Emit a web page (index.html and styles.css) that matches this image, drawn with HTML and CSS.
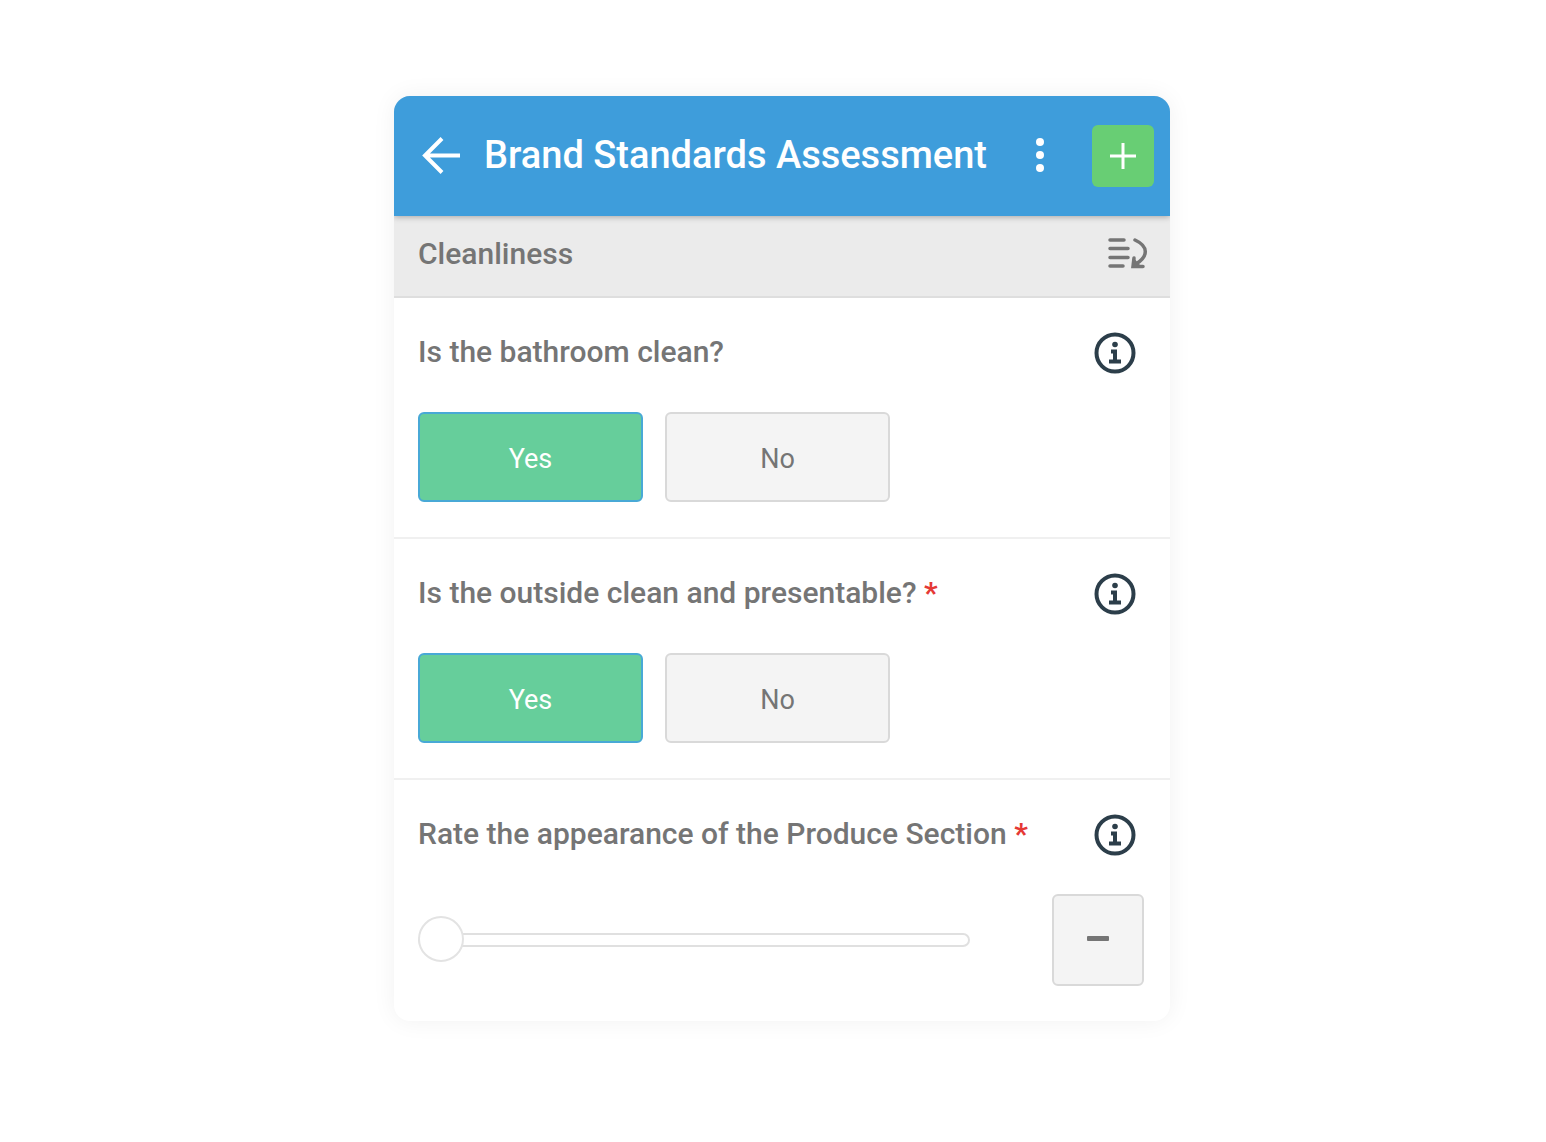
FILE: index.html
```html
<!DOCTYPE html>
<html lang="en">
<head>
    <meta charset="UTF-8">
    <meta name="viewport" content="width=device-width, initial-scale=1">
    <title>Brand Standards Assessment</title>
    <link rel="stylesheet" href="styles.css">
</head>
<body>
    <main class="card">
        <header class="top-bar">
            <button class="icon-btn" type="button" aria-label="Back">
                <svg width="40" height="40" viewBox="0 0 40 40" fill="none" stroke="currentColor" stroke-width="4">
                    <path d="M39 19.500H5M21 2.500L4 19.500L21 36.500"/>
                </svg>
            </button>
            <h1>Brand Standards Assessment</h1>
            <button class="icon-btn menu-btn" type="button" aria-label="More options">
                <svg width="10" height="36" viewBox="0 0 10 36" fill="currentColor">
                    <circle cx="5" cy="4" r="4"/>
                    <circle cx="5" cy="17" r="4"/>
                    <circle cx="5" cy="30" r="4"/>
                </svg>
            </button>
            <button class="icon-btn add-btn" type="button" aria-label="Add">
                <svg width="26" height="26" viewBox="0 0 26 26" fill="none" stroke="currentColor" stroke-width="3">
                    <path d="M13 0V26M0 13H26"/>
                </svg>
            </button>
        </header>

        <div class="section-bar">
            <h2>Cleanliness</h2>
            <button class="icon-btn" type="button" aria-label="Jump to section">
                <svg width="40" height="32" viewBox="0 0 40 32" fill="none" stroke="currentColor" stroke-width="3.500" stroke-linecap="round">
                    <path d="M2 2H16M2 10.500H20M2 19.500H20M2 28H15"/>
                    <path d="M27 2C40 8 41 18 28 26"/>
                    <path d="M26 20L25 28.500H35"/>
                    <path d="M26 20L24 29H34L30 25Z" fill="currentColor" stroke="none"/>
                </svg>
            </button>
        </div>

        <section class="question">
            <div class="question-head">
                <h3>Is the bathroom clean?</h3>
                <button class="icon-btn info-btn" type="button" aria-label="Info">
                    <svg width="42" height="42" viewBox="0 0 42 42">
                        <circle cx="21" cy="21" r="18.500" fill="none" stroke="currentColor" stroke-width="4"/>
                        <circle cx="21" cy="12.500" r="2.800" fill="currentColor"/>
                        <path d="M17 17.500H23V27.500H27V31.500H15V27.500H19V21.500H17z" fill="currentColor"/>
                    </svg>
                </button>
            </div>
            <div class="answers">
                <button class="answer selected" type="button" aria-pressed="true">Yes</button>
                <button class="answer" type="button" aria-pressed="false">No</button>
            </div>
        </section>

        <section class="question">
            <div class="question-head">
                <h3>Is the outside clean and presentable? <span class="required">*</span></h3>
                <button class="icon-btn info-btn" type="button" aria-label="Info">
                    <svg width="42" height="42" viewBox="0 0 42 42">
                        <circle cx="21" cy="21" r="18.500" fill="none" stroke="currentColor" stroke-width="4"/>
                        <circle cx="21" cy="12.500" r="2.800" fill="currentColor"/>
                        <path d="M17 17.500H23V27.500H27V31.500H15V27.500H19V21.500H17z" fill="currentColor"/>
                    </svg>
                </button>
            </div>
            <div class="answers">
                <button class="answer selected" type="button" aria-pressed="true">Yes</button>
                <button class="answer" type="button" aria-pressed="false">No</button>
            </div>
        </section>

        <section class="question">
            <div class="question-head">
                <h3><label for="rating">Rate the appearance of the Produce Section <span class="required">*</span></label></h3>
                <button class="icon-btn info-btn" type="button" aria-label="Info">
                    <svg width="42" height="42" viewBox="0 0 42 42">
                        <circle cx="21" cy="21" r="18.500" fill="none" stroke="currentColor" stroke-width="4"/>
                        <circle cx="21" cy="12.500" r="2.800" fill="currentColor"/>
                        <path d="M17 17.500H23V27.500H27V31.500H15V27.500H19V21.500H17z" fill="currentColor"/>
                    </svg>
                </button>
            </div>
            <div class="rating">
                <input type="range" id="rating" min="0" max="10" value="0">
                <button class="answer minus-btn" type="button" aria-label="Clear rating">
                    <svg width="22" height="5" viewBox="0 0 22 5" fill="currentColor">
                        <rect width="22" height="5" rx="1"/>
                    </svg>
                </button>
            </div>
        </section>
    </main>
</body>
</html>
```

FILE: styles.css
```css
*{
    box-sizing: border-box;
}
body{
    margin: 0;
    padding: 96px 0 96px 18px;
    background-color: white;
    font-family: Roboto, "Liberation Sans", sans-serif;
    color: #757575;
}
h1, h2, h3{
    margin: 0;
    font-weight: 500;
}
button{
    font-family: inherit;
    color: inherit;
    cursor: pointer;
}
.card{
    max-width: 776px;
    margin: 0 auto;
    border-radius: 16px;
    overflow: hidden;
    background-color: white;
    box-shadow: 0 0 24px rgba(0, 0, 0, 0.06);
}
.icon-btn{
    display: flex;
    flex-shrink: 0;
    align-items: center;
    justify-content: center;
    padding: 0;
    border: none;
    background: none;
}

/* top bar */
.top-bar{
    position: relative;
    display: flex;
    align-items: center;
    height: 120px;
    padding: 0 16px 0 27px;
    background-color: #3e9ddb;
    color: white;
    box-shadow: 0 1px 6px rgba(0, 0, 0, 0.3);
}
h1{
    flex: 1;
    margin-left: 23px;
    padding-bottom: 2px;
    font-size: 38px;
    line-height: 48px;
}
.menu-btn{
    width: 40px;
    margin-right: 32px;
}
.add-btn{
    width: 62px;
    height: 62px;
    border-radius: 6px;
    background-color: #68ce74;
}

.section-bar{
    display: flex;
    align-items: center;
    justify-content: space-between;
    height: 82px;
    padding: 0 22px 4px 24px;
    border-bottom: 2px solid #dedede;
    background-color: #ebebeb;
}
h2, h3{
    font-size: 30px;
    line-height: 40px;
}

/* questions */
.question{
    padding: 34px 26px 35px 24px;
    border-bottom: 2px solid #f0f0f0;
}
.question:last-child{
    border-bottom: none;
}
.question-head{
    display: flex;
    justify-content: space-between;
    margin-bottom: 38px;
}
.info-btn{
    margin-right: 8px;
    color: #2c3e4a;
}
.required{
    color: #e53935;
    font-weight: 700;
}
.answers{
    display: flex;
    gap: 22px;
}
.answer{
    width: 225px;
    height: 90px;
    padding: 4px 0 0;
    border: 2px solid #d9d9d9;
    border-radius: 6px;
    background-color: #f4f4f4;
    font-size: 27px;
}
.selected{
    border-color: #48a9d6;
    background-color: #66ce9b;
    color: white;
}
.rating{
    display: flex;
    align-items: center;
    justify-content: space-between;
}
.minus-btn{
    display: flex;
    align-items: center;
    justify-content: center;
    width: 92px;
    height: 92px;
    padding: 0 0 4px;
}
input[type=range]{
    width: 76%;
    height: 46px;
    margin: 0;
    background: none;
    appearance: none;
}
input[type=range]::-webkit-slider-runnable-track{
    height: 14px;
    border-radius: 7px;
    box-shadow: inset 0 0 0 2px #e0e0e0;
}
input[type=range]::-webkit-slider-thumb{
    width: 46px;
    height: 46px;
    margin-top: -17px;
    border: 2px solid #e3e3e3;
    border-radius: 50%;
    background-color: white;
    appearance: none;
}
```
